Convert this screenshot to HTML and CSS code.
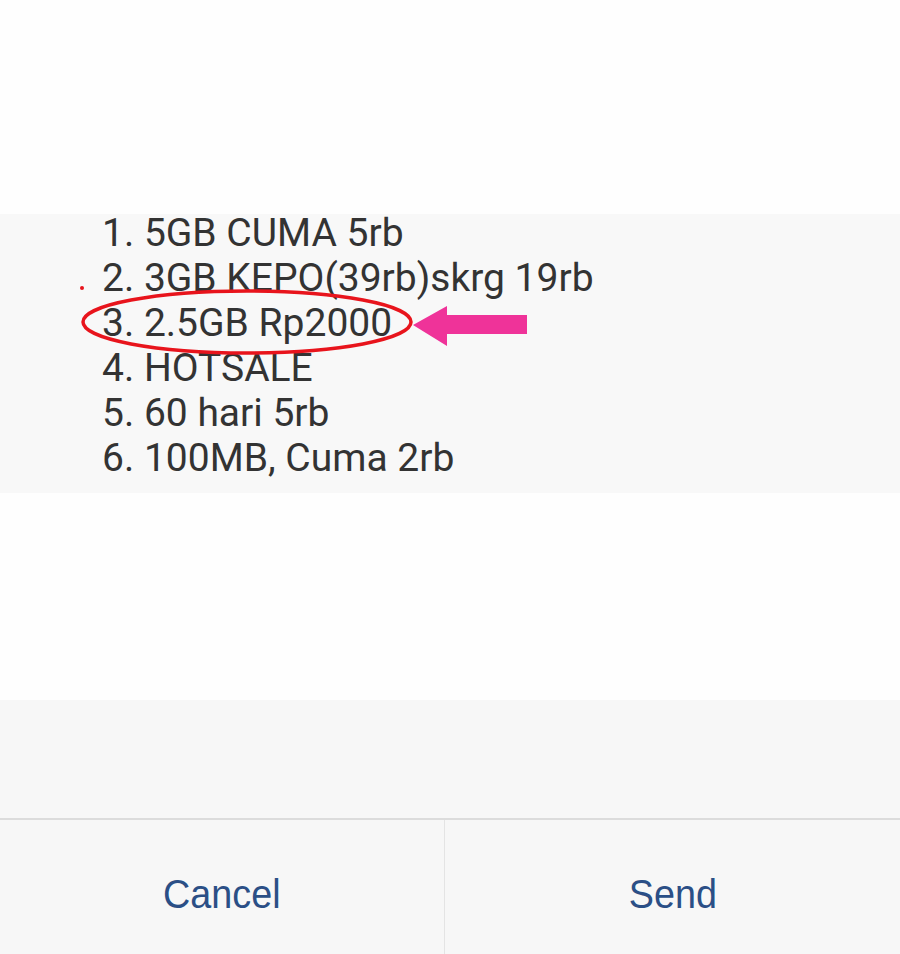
FILE: index.html
```html
<!DOCTYPE html>
<html>
<head>
<meta charset="utf-8">
<link rel="stylesheet" href="styles.css">
</head>
<body>
<div class="screen">
  <div class="top"></div>
  <div class="message">
    <div class="lines">
      <div class="line">1. 5GB CUMA 5rb</div>
      <div class="line">2. 3GB KEPO(39rb)skrg 19rb</div>
      <div class="line">3. 2.5GB Rp2000</div>
      <div class="line">4. HOTSALE</div>
      <div class="line">5. 60 hari 5rb</div>
      <div class="line">6. 100MB, Cuma 2rb</div>
    </div>
    <svg class="annot" width="900" height="279" viewBox="0 214 900 279">
      <ellipse cx="247" cy="322" rx="164" ry="31" fill="none" stroke="#e8141c" stroke-width="3.5"/>
      <circle cx="82" cy="288" r="2" fill="#e8141c"/>
      <polygon points="413,325 447,306 447,315 527,315 527,334 447,334 447,346" fill="#ef3399"/>
    </svg>
  </div>
  <div class="gap"></div>
  <div class="footer">
    <div class="footer-space"></div>
    <div class="buttons">
      <div class="btn btn-cancel"><span class="btn-label">Cancel</span></div>
      <div class="btn"><span class="btn-label">Send</span></div>
    </div>
  </div>
</div>
</body>
</html>
```

FILE: styles.css
```css
html, body {
  margin: 0;
  padding: 0;
  background: #fefefe;
}
.screen {
  width: 900px;
  height: 954px;
  display: flex;
  flex-direction: column;
  overflow: hidden;
  font-family: Roboto, "Liberation Sans", sans-serif;
}
.top {
  height: 214px;
  background: #fefefe;
}
.message {
  position: relative;
  height: 279px;
  background: #f8f8f8;
  padding: 0 0 0 102px;
  box-sizing: border-box;
}
.lines {
  margin-top: -3px;
}
.line {
  font-size: 39px;
  line-height: 45px;
  color: #333333;
  white-space: nowrap;
}
.annot {
  position: absolute;
  left: 0;
  top: 0;
}
.gap {
  height: 207px;
  background: #fefefe;
}
.footer {
  flex: 1;
  display: flex;
  flex-direction: column;
  background: #f7f7f7;
}
.footer-space {
  height: 118px;
  border-bottom: 2px solid #dcdcdc;
}
.buttons {
  flex: 1;
  display: flex;
}
.btn {
  flex: 1;
  display: flex;
  align-items: center;
  justify-content: center;
  padding-top: 14px;
  font-size: 41px;
  color: #2b4f86;
  font-family: "Liberation Sans", Arial, sans-serif;
}
.btn-cancel {
  flex: 0 0 444px;
  border-right: 1px solid #e4e4e4;
}
.btn-label {
  display: inline-block;
  transform: scaleX(0.92);
}
```
